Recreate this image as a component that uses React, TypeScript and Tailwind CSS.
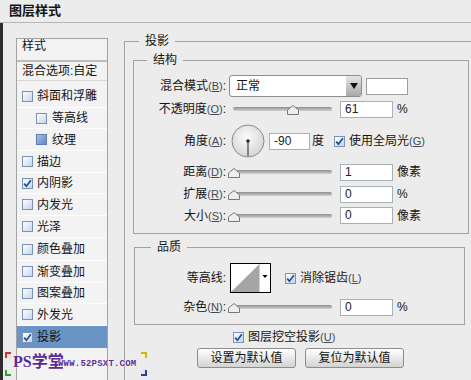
import clsx from 'clsx'

// ============================================
// DATA
// ============================================
type StyleRow = {
  label: string
  h: string
  sub?: boolean
  checked?: boolean
  filled?: boolean
  selected?: boolean
}

const STYLE_ROWS: StyleRow[] = [
  { label: '斜面和浮雕', h: 'h-[27px] pt-[4px]' },
  { label: '等高线', h: 'h-[21px]', sub: true },
  { label: '纹理', h: 'h-[22px]', sub: true, filled: true },
  { label: '描边', h: 'h-[22px]' },
  { label: '内阴影', h: 'h-[21px]', checked: true },
  { label: '内发光', h: 'h-[22px]' },
  { label: '光泽', h: 'h-[22px]' },
  { label: '颜色叠加', h: 'h-[23px]' },
  { label: '渐变叠加', h: 'h-[22px]' },
  { label: '图案叠加', h: 'h-[21px]' },
  { label: '外发光', h: 'h-[22px]' },
  { label: '投影', h: 'h-[22px]', checked: true, selected: true },
]

// ============================================
// SMALL PIECES
// ============================================
function Check({ checked, filled }: { checked?: boolean; filled?: boolean }) {
  return (
    <span
      className={clsx(
        'flex h-[11px] w-[11px] shrink-0 items-center justify-center border bg-gradient-to-br',
        filled
          ? 'border-[#5d7fae] from-[#a9c0e3] to-[#6189c2]'
          : 'border-[#7b93b3] from-white to-[#c6d5ea]'
      )}
    >
      {checked && (
        <svg width="9" height="9" viewBox="0 0 9 9">
          <path d="M1.2 4.6 L3.4 7.2 L7.9 1.3" fill="none" stroke="#1d4c8f" strokeWidth="1.7" />
        </svg>
      )}
    </span>
  )
}

// mnemonic like (B)
function Mn({ k }: { k: string }) {
  return (
    <span className="text-[11px] text-[#404b57]">
      (<span className="underline">{k}</span>)
    </span>
  )
}

function Label({ text, k, w = 'w-[92px]' }: { text: string; k?: string; w?: string }) {
  return (
    <div className={clsx('shrink-0 text-right leading-[14px]', w)}>
      {text}
      {k && <Mn k={k} />}:
    </div>
  )
}

function Slider({ at }: { at: number }) {
  return (
    <div className="relative ml-[3px] h-[4px] w-[99px] shrink-0 rounded-full bg-gradient-to-b from-[#8f8f8f] to-[#d2d2d2]">
      <svg className="absolute top-[-2px]" style={{ left: at }} width="12" height="10" viewBox="0 0 12 10">
        <path d="M6 0.5 L11.5 5 V9.5 H0.5 V5 Z" fill="#eeeeee" stroke="#777" />
      </svg>
    </div>
  )
}

function Field({ v, className }: { v: string; className?: string }) {
  return (
    <div
      className={clsx(
        'h-[17px] shrink-0 border border-[#a9b0b8] bg-white pl-[4px] font-["Liberation_Sans"] text-[12px] leading-[15px] text-[#222]',
        className
      )}
    >
      {v}
    </div>
  )
}

function Button({ children }: { children: string }) {
  return (
    <div className="flex h-[20px] w-[99px] items-center justify-center rounded-[3px] border border-[#8d8d8d] bg-gradient-to-b from-white to-[#d3d3d3] text-[12px] leading-[14px]">
      {children}
    </div>
  )
}

// ============================================
// APP
// ============================================
export default function App() {
  return (
    <div className="relative h-[380px] w-[471px] overflow-hidden bg-[#ececec] font-['Liberation_Sans','Noto_Sans_CJK_SC',sans-serif] text-[12px] text-[#141414]">
      {/* title */}
      <div className="h-[23px] border-b border-[#b6b6b6] pl-[9px] text-[13px] font-bold leading-[22px]">图层样式</div>

      <div className="flex h-[357px] border-l-[3px] border-[#2c2c2c]">
        {/* style list */}
        <div className="ml-[13px] mt-[15px] flex h-[360px] w-[92px] shrink-0 flex-col border border-[#a3a3a3] bg-[#f3f3f3]">
          <div className="h-[23px] border-b-2 border-[#bdbdbd] pl-[5px] leading-[14px]">样式</div>
          <div className="flex h-[19px] items-center border-b border-[#d6d6d6] pl-[5px] leading-[14px]">混合选项:自定</div>
          {STYLE_ROWS.map((r) => (
            <div
              key={r.label}
              className={clsx(
                'flex items-center leading-[14px]',
                r.h,
                r.sub ? 'gap-[5px] pl-[19px]' : 'gap-[4px] pl-[5px]',
                r.selected ? 'bg-[#6a93c6]' : 'border-b border-[#fdfdfd]'
              )}
            >
              <Check checked={r.checked} filled={r.filled} />
              <span>{r.label}</span>
            </div>
          ))}
        </div>

        {/* drop shadow panel */}
        <fieldset className="ml-[16px] mt-[11px] h-[400px] w-[360px] shrink-0 border-l border-t border-[#a2a2a2]">
          <legend className="ml-[14px] px-[6px] leading-[14px]">投影</legend>

          <fieldset className="ml-[8px] mt-[5px] w-[336px] border border-[#a2a2a2] pb-[7px] pt-[8px]">
            <legend className="ml-[13px] px-[6px] leading-[14px]">结构</legend>

            <div className="flex h-[22px] items-center">
              <Label text="混合模式" k="B" />
              <div className="ml-[3px] flex h-[22px] w-[133px] shrink-0 overflow-hidden rounded-[3px] border border-[#8c8c8c] bg-white">
                <div className="flex-1 pl-[6px] leading-[20px]">正常</div>
                <div className="flex w-[15px] items-center justify-center bg-gradient-to-b from-[#e6e6e6] to-[#a9a9a9]">
                  <svg width="8" height="6" viewBox="0 0 8 6">
                    <path d="M0 0 H8 L4 6 Z" fill="#111" />
                  </svg>
                </div>
              </div>
              <div className="ml-[4px] h-[17px] w-[42px] shrink-0 border border-[#9c9c9c] bg-white" />
            </div>

            <div className="flex h-[24px] items-center">
              <Label text="不透明度" k="O" />
              <div className="ml-[4px] flex items-center">
                <Slider at={54} />
                <Field v="61" className="ml-[8px] w-[53px]" />
                <span className="ml-[4px] leading-[14px]">%</span>
              </div>
            </div>

            <div className="flex h-[40px] items-center">
              <Label text="角度" k="A" />
              <div className="ml-[5px] flex items-center">
                <svg width="34" height="34" viewBox="0 0 34 34">
                  <defs>
                    <radialGradient id="dial" cx="45%" cy="40%" r="65%">
                      <stop offset="0" stopColor="#fbfbfb" />
                      <stop offset="1" stopColor="#d3d3d3" />
                    </radialGradient>
                  </defs>
                  <circle cx="17" cy="17" r="16" fill="url(#dial)" stroke="#8a8a8a" />
                  <line x1="17" y1="17" x2="17" y2="32" stroke="#5a5a5a" strokeWidth="1.4" />
                  <circle cx="17" cy="17" r="1.8" fill="#2f2f2f" />
                </svg>
                <Field v="-90" className="ml-[4px] w-[41px]" />
                <span className="ml-[2px] leading-[14px]">度</span>
                <span className="ml-[10px]">
                  <Check checked />
                </span>
                <span className="ml-[4px] leading-[14px]">
                  使用全局光<Mn k="G" />
                </span>
              </div>
            </div>

            {[
              { t: '距离', k: 'D', v: '1', u: '像素', h: 'h-[22px]' },
              { t: '扩展', k: 'R', v: '0', u: '%', h: 'h-[22px]' },
              { t: '大小', k: 'S', v: '0', u: '像素', h: 'h-[21px]' },
            ].map((r) => (
              <div key={r.t} className={clsx('flex items-center', r.h)}>
                <Label text={r.t} k={r.k} />
                <div className="ml-[4px] flex items-center">
                  <Slider at={-5} />
                  <Field v={r.v} className="ml-[8px] w-[53px]" />
                  <span className="ml-[4px] leading-[14px]">{r.u}</span>
                </div>
              </div>
            ))}
          </fieldset>

          <fieldset className="ml-[9px] mt-[6px] w-[331px] border border-[#a2a2a2] pb-[6px] pt-[9px]">
            <legend className="ml-[16px] px-[6px] leading-[14px]">品质</legend>

            <div className="flex h-[30px] items-center">
              <Label text="等高线" w="w-[91px]" />
              <div className="ml-[4px] flex items-center">
                <svg width="41" height="30" viewBox="0 0 41 30">
                  <rect x="0.5" y="0.5" width="40" height="29" fill="#fff" stroke="#000" />
                  <path d="M1 29 L29.5 1 V29 Z" fill="#a5a5a5" />
                  <line x1="29.5" y1="1" x2="29.5" y2="29" stroke="#d0d0d0" />
                  <path d="M32.5 12 H37.5 L35 15 Z" fill="#000" />
                </svg>
                <span className="ml-[14px]">
                  <Check checked />
                </span>
                <span className="ml-[4px] leading-[14px]">
                  消除锯齿<Mn k="L" />
                </span>
              </div>
            </div>

            <div className="mt-[3px] flex h-[22px] items-center">
              <Label text="杂色" k="N" w="w-[91px]" />
              <div className="ml-[4px] flex items-center">
                <Slider at={-5} />
                <Field v="0" className="ml-[8px] w-[53px]" />
                <span className="ml-[4px] leading-[14px]">%</span>
              </div>
            </div>
          </fieldset>

          <div className="ml-[108px] mt-[5px] flex h-[14px] items-center">
            <Check checked />
            <span className="ml-[4px] leading-[14px]">
              图层挖空投影<Mn k="U" />
            </span>
          </div>

          <div className="ml-[72px] mt-[4px] flex gap-[9px]">
            <Button>设置为默认值</Button>
            <Button>复位为默认值</Button>
          </div>
        </fieldset>
      </div>

      {/* watermark */}
      <div className="pointer-events-none absolute left-[5px] top-[352px] h-[24px] w-[142px]">
        <span className="absolute left-0 top-0 h-[6px] w-[6px] border-l-2 border-t-2 border-[#c0392b] bg-[#f5e0e0]" />
        <span className="absolute bottom-0 left-0 h-[6px] w-[6px] border-b-2 border-l-2 border-[#3f9a3a] bg-[#e3f4e0]" />
        <span className="absolute right-0 top-0 h-[6px] w-[6px] border-r-2 border-t-2 border-[#d4b21c] bg-[#fbf3cf]" />
        <span className="absolute bottom-0 right-0 h-[6px] w-[6px] border-b-2 border-r-2 border-[#2b3f8f] bg-[#e0e4f5]" />
        <span className="absolute left-[8px] top-[1px] font-['Liberation_Serif','Noto_Sans_CJK_SC',serif] text-[16px] font-bold leading-[18px] text-[#5a2a92] [text-shadow:0_0_2px_#fff,0_0_1px_#fff]">
          PS学堂
        </span>
        <span className="absolute left-[53px] top-[8px] font-['Liberation_Mono',monospace] text-[9px] font-bold leading-[9px] tracking-[0.2px] text-[#5a2a92] [text-shadow:0_0_1px_#fff,0_0_1px_#fff]">
          WWW.52PSXT.COM
        </span>
      </div>
    </div>
  )
}
